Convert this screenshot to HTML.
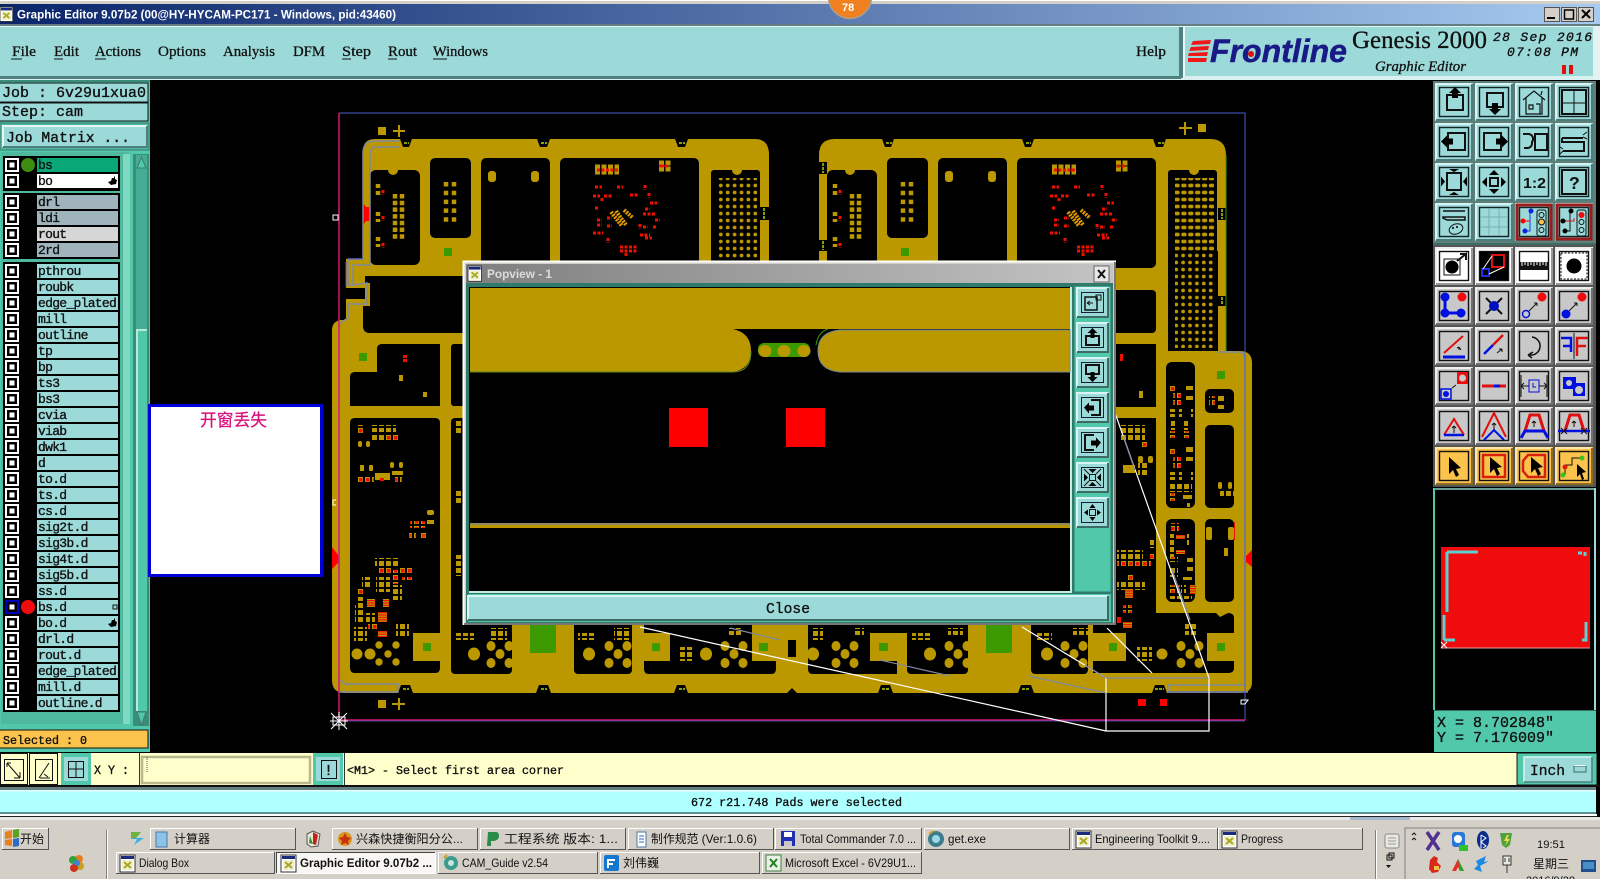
<!DOCTYPE html>
<html><head><meta charset="utf-8"><title>Graphic Editor</title>
<style>
html,body{margin:0;padding:0;background:#000;overflow:hidden}
svg{display:block;position:absolute;left:0;top:0}
.m{font-family:"Liberation Mono",monospace;font-weight:normal;fill:#111;stroke:#111;stroke-width:.35}
.s{font-family:"Liberation Serif",serif;font-weight:normal;fill:#111;stroke:#111;stroke-width:.3}
.a{font-family:"Liberation Sans","Noto Sans CJK SC",sans-serif;fill:#111}
.l text{font-family:"Liberation Mono",monospace;font-weight:normal;fill:#111;stroke:#111;stroke-width:.35;font-size:13px;letter-spacing:-.7px}
.k{fill:none;stroke:#111;stroke-width:2}
.n{fill:none;stroke:#111;stroke-width:1}
</style></head><body>
<svg width="1600" height="879" viewBox="0 0 1600 879">
<defs>
<linearGradient id="tg"><stop offset="0" stop-color="#0a246a"/><stop offset="1" stop-color="#a6caf0"/></linearGradient>
<linearGradient id="pg"><stop offset="0" stop-color="#7f7f7f"/><stop offset="1" stop-color="#c4c4c4"/></linearGradient>
<pattern id="bga" width="6.9" height="7" patternUnits="userSpaceOnUse"><circle cx="3.2" cy="3.5" r="1.9" fill="#bc9800"/></pattern>
<pattern id="gp" width="7" height="7" patternUnits="userSpaceOnUse"><rect x="1" y="1" width="5" height="5" fill="#bc9800"/></pattern>
<pattern id="rp" width="7" height="7" patternUnits="userSpaceOnUse"><rect x="1" y="1" width="5" height="5" fill="#bc9800"/><rect x="2" y="2" width="3.500" height="3.500" fill="#f01000"/></pattern>
<pattern id="op" width="3" height="2.400" patternUnits="userSpaceOnUse"><rect width="3" height="2.400" fill="#bc9800"/><rect width="3" height="1.200" fill="#f01000"/></pattern>
<g id="ck"><rect x="5" width="14" height="14" fill="#fff"/><rect x="7" y="2" width="10" height="10"/><rect x="9.5" y="4.5" width="5" height="5" fill="#fff"/></g>
<g id="row"><use href="#ck"/><rect x="37" width="81" height="14" fill="#9cd9d9"/></g>
<g id="hand"><path d="M0 6l3-1 1-3 2 0 0-2 1 1 0 2 2 1-1 4-5 1z"/></g>
<g id="bt"><rect width="38" height="38" fill="#9cd9d9"/><path d="M1 37V1H37" fill="none" stroke="#d8f4f4" stroke-width="2"/><path d="M37 1V37H1" fill="none" stroke="#4d7d7d" stroke-width="2"/><rect x="4.5" y="4.5" width="29" height="29" fill="none" stroke="#122" stroke-width="1.400"/></g>
<g id="bw"><rect width="38" height="38" fill="#fff"/><path d="M1 37V1H37" fill="none" stroke="#eee" stroke-width="2"/><path d="M37 1V37H1" fill="none" stroke="#999" stroke-width="2"/><rect x="4.5" y="4.5" width="29" height="29" fill="none" stroke="#111" stroke-width="1.400"/></g>
<g id="bg"><rect width="38" height="38" fill="#c8c8c8"/><path d="M1 37V1H37" fill="none" stroke="#eee" stroke-width="2"/><path d="M37 1V37H1" fill="none" stroke="#707070" stroke-width="2"/><rect x="4.5" y="4.5" width="29" height="29" fill="none" stroke="#111" stroke-width="1.400"/></g>
<g id="bo"><rect width="38" height="38" fill="#fcc34c"/><path d="M1 37V1H37" fill="none" stroke="#ffe6a8" stroke-width="2"/><path d="M37 1V37H1" fill="none" stroke="#8c6c20" stroke-width="2"/><rect x="4.5" y="4.5" width="29" height="29" fill="none" stroke="#111" stroke-width="1.400"/></g>
<g id="pb"><rect width="33" height="31" fill="#9cd9d9"/><path d="M1 30V1H32" fill="none" stroke="#d8f4f4" stroke-width="2"/><path d="M32 1V30H1" fill="none" stroke="#3c6c64" stroke-width="2"/><rect x="5.500" y="5.500" width="22" height="20" fill="none" stroke="#123"/></g>
<g id="xi"><rect width="15" height="17" fill="#fff" stroke="#333"/><rect x="1" y="1" width="13" height="3" fill="#1a2a7a"/><rect x="2" y="5" width="11" height="10" fill="#f0f0d0"/><path d="M4 7l7 6M11 7l-7 6" stroke="#a8a820" stroke-width="2"/></g>
<g id="c5" fill="#bc9800"><ellipse rx="4.500" ry="5"/><ellipse cy="17" rx="4.500" ry="5"/><ellipse cx="18" rx="4.500" ry="5"/><ellipse cx="18" cy="17" rx="4.500" ry="5"/><ellipse cx="9" cy="8" rx="4.500" ry="5"/></g>
<g id="up">
<g fill="#000"><rect x="370" y="170" width="50" height="95" rx="6"/><rect x="430" y="158" width="41" height="80" rx="5"/><rect x="481" y="158" width="69" height="110" rx="5"/><rect x="560" y="158" width="139" height="110" rx="5"/><rect x="711" y="170" width="49" height="110" rx="3"/></g>
<circle cx="393" cy="170" r="5" fill="#bc9800"/><circle cx="737" cy="170" r="5" fill="#bc9800"/>
<rect x="718" y="178" width="39" height="83" fill="url(#bga)"/>
<rect x="488" y="171" width="8" height="11" rx="3" fill="#bc9800"/><rect x="531" y="171" width="8" height="11" rx="3" fill="#bc9800"/>
<rect x="444" y="248" width="8" height="8" fill="#3c9a00"/>
<g fill="none" stroke="#bc9800">
<path stroke-width="4.500" stroke-dasharray="4.500 2.200" d="M395 194V240M402 194V240"/>
<path stroke-width="4.500" stroke-dasharray="4.500 4.300" d="M446 182V222M454 182V222"/>
<path stroke-width="4.500" stroke-dasharray="4 3" d="M378 184V195M378 212V222M378 237V247"/>
<path stroke-width="5" stroke-dasharray="5 1.500" d="M595 167H619M595 172H619M659 163H671M659 169H671"/>
</g>
<g fill="none" stroke="#f01000" stroke-width="3" stroke-dasharray="3 1.500">
<path d="M383 190V195M383 216V221M383 243V248M595 187H602M617 187H623M645 185V190M593 196H600M604 196H612M602 198V202M630 195H639M649 193V198M650 203H657M595 208H599M645 209H650M643 214H655M597 220H602M597 225H602M607 218H612M607 226H612M640 224V229M643 227H648M653 227H657M655 220H660M593 233H603M640 235H650M645 238H652M608 238V243M620 247H637M620 251H637M626 253V257M597 170H618M660 166H669"/>
</g>
<path d="M611 212L622 226M616 211L626 225M624 210L633 218" stroke="#e09a00" stroke-width="4" stroke-dasharray="2 1" fill="none"/>
</g>
</defs>
<rect width="1600" height="879" fill="#000"/>

<!-- PCB -->
<path fill="#bc9800" d="M375 139H400L403 147H409L412 139H537L540 147H547L550 139H675L678 147H685L688 139H755Q769 139 769 155V270H819V155Q819 139 835 139H882L885 147H891L894 139H1022L1025 147H1031L1034 139H1153L1156 147H1163L1166 139H1210Q1226 139 1226 155V351H1240Q1252 351 1252 363V682Q1252 693 1240 693H1167L1164 685H1155L1152 693H1034L1031 685H1021L1018 693H893L890 685H881L878 693H797L792 688L787 693H688L685 685H677L674 693H551L548 685H539L536 693H413L410 685H401L398 693H345Q332 693 332 680V330Q332 322 340 320H346V299H365V288H346V259H363V151Q363 139 375 139Z"/>
<g fill="#000">
<rect x="760" y="207" width="9" height="13"/><rect x="1218" y="208" width="8" height="12"/><rect x="1218" y="296" width="8" height="10"/><rect x="819" y="162" width="8" height="12"/><rect x="819" y="240" width="8" height="11"/>
<path d="M365 276H470V333H370Q363 333 363 326V306H370V283H365Z"/>
<path d="M382 344H440V406H350V377Q350 372 355 372H377V349Q377 344 382 344Z"/>
<rect x="451" y="344" width="20" height="62" rx="3"/>
<path d="M355 418H435Q440 418 440 423V633H413V661H440V668Q440 673 435 673H355Q350 673 350 668V423Q350 418 355 418Z"/>
<rect x="451" y="418" width="61" height="256" rx="4"/>
<rect x="574" y="600" width="58" height="74" rx="4"/>
<path d="M644 600H752V661H776V669Q776 674 771 674H649Q644 674 644 669Z"/>
<path d="M808 600H907V633H870V661H897V674H813Q808 674 808 669Z"/>
<path d="M870 600H907V633H870Z"/>
<rect x="907" y="600" width="61" height="74" rx="4"/>
<rect x="1031" y="600" width="57" height="74" rx="4"/>
<path d="M1093 600H1126V661H1093ZM1100 344H1156V407H1100ZM1100 418H1156V613H1216L1220 617L1228 613Q1234 613 1234 618V668Q1234 673 1228 673H1093V661H1100ZM1100 661"/>
<rect x="1100" y="290" width="56" height="43" rx="4"/>
<rect x="1166" y="362" width="29" height="146" rx="6"/><rect x="1166" y="519" width="29" height="83" rx="6"/>
<rect x="1205" y="389" width="29" height="24" rx="5"/><rect x="1205" y="425" width="29" height="83" rx="5"/><rect x="1205" y="519" width="29" height="83" rx="5"/>
</g>
<g fill="#bc9800"><rect x="1207" y="633" width="27" height="28"/><rect x="644" y="633" width="26" height="28"/><rect x="752" y="633" width="24" height="28"/><rect x="870" y="633" width="27" height="28"/><rect x="1093" y="633" width="33" height="28"/></g>
<rect x="788" y="640" width="8" height="17" fill="#000"/>
<use href="#up"/><use href="#up" transform="translate(457,0)"/>
<rect x="1168" y="251" width="50" height="100" fill="#000"/>
<rect x="1175" y="178" width="39" height="170" fill="url(#bga)"/>
<rect x="1218" y="306" width="8" height="45" fill="#bc9800"/>
<path d="M1226 155V351" stroke="#3c9a00" stroke-width="1"/>
<path d="M764 208v11M1222 209v10M1222 297v8M823 163v10M823 241v9" stroke="#8aa000" stroke-width="2" stroke-dasharray="3 1"/>
<g fill="#3c9a00"><rect x="530" y="625" width="26" height="28"/><rect x="986" y="625" width="26" height="28"/><rect x="359" y="353" width="8" height="8"/><rect x="423" y="643" width="8" height="8"/><rect x="652" y="643" width="8" height="8"/><rect x="759" y="643" width="9" height="8"/><rect x="879" y="643" width="9" height="8"/><rect x="1109" y="643" width="8" height="8"/><rect x="1217" y="371" width="8" height="8"/><rect x="1217" y="643" width="8" height="8"/></g>

<!-- pads H and lower -->
<g fill="url(#gp)">
<rect x="370" y="425" width="26" height="7"/><rect x="370" y="433" width="18" height="7"/><rect x="409" y="533" width="7" height="7"/><rect x="420" y="533" width="7" height="7"/>
<rect x="375" y="558" width="24" height="9"/><rect x="362" y="577" width="10" height="10"/><rect x="376" y="577" width="14" height="15"/><rect x="392" y="585" width="10" height="15"/><rect x="357" y="597" width="8" height="8"/><rect x="355" y="605" width="10" height="18"/><rect x="366" y="613" width="9" height="9"/><rect x="354" y="627" width="13" height="14"/><rect x="396" y="624" width="13" height="13"/>
<rect x="456" y="633" width="18" height="7"/><rect x="491" y="628" width="16" height="12"/><rect x="578" y="633" width="18" height="7"/><rect x="614" y="628" width="15" height="12"/><rect x="680" y="647" width="13" height="14"/><rect x="729" y="628" width="12" height="7"/><rect x="813" y="628" width="10" height="12"/><rect x="854" y="628" width="10" height="7"/><rect x="912" y="633" width="18" height="7"/><rect x="948" y="628" width="15" height="7"/><rect x="1035" y="633" width="17" height="7"/><rect x="1073" y="628" width="15" height="7"/><rect x="1137" y="647" width="15" height="14"/><rect x="1185" y="623" width="13" height="12"/>
<rect x="1169" y="409" width="8" height="8"/><rect x="1179" y="409" width="4" height="8"/><rect x="1189" y="409" width="4" height="8"/><rect x="1171" y="419" width="6" height="11"/><rect x="1182" y="419" width="6" height="11"/><rect x="1169" y="472" width="8" height="8"/><rect x="1179" y="472" width="4" height="8"/><rect x="1189" y="472" width="4" height="8"/><rect x="1169" y="482" width="23" height="10"/><rect x="1169" y="534" width="5" height="23"/><rect x="1187" y="534" width="4" height="13"/><rect x="1181" y="585" width="5" height="8"/><rect x="1168" y="595" width="24" height="4"/><rect x="1170" y="566" width="8" height="11"/>
<rect x="1120" y="425" width="25" height="15"/><rect x="1138" y="463" width="10" height="12"/><rect x="1117" y="550" width="26" height="10"/><rect x="1117" y="582" width="28" height="8"/><rect x="1150" y="539" width="4" height="9"/>
<rect x="1220" y="489" width="14" height="7"/><rect x="455" y="420" width="8" height="14"/><rect x="455" y="490" width="8" height="14"/><rect x="455" y="555" width="8" height="21"/>
</g>
<g fill="url(#rp)">
<rect x="358" y="425" width="7" height="10"/><rect x="386" y="433" width="14" height="7"/><rect x="356" y="476" width="18" height="7"/><rect x="395" y="475" width="7" height="7"/><rect x="410" y="521" width="15" height="7"/><rect x="409" y="533" width="7" height="7" opacity=".7"/><rect x="420" y="533" width="7" height="7" opacity=".7"/>
<rect x="377" y="568" width="14" height="7"/><rect x="400" y="568" width="12" height="7"/><rect x="402" y="577" width="10" height="5"/><rect x="391" y="570" width="7" height="14"/><rect x="358" y="587" width="7" height="8"/><rect x="368" y="623" width="9" height="7"/>
<rect x="1170" y="384" width="7" height="8"/><rect x="1173" y="393" width="8" height="14"/><rect x="1169" y="431" width="8" height="7"/><rect x="1182" y="431" width="7" height="7"/><rect x="1170" y="448" width="7" height="6"/><rect x="1173" y="457" width="8" height="13"/><rect x="1168" y="493" width="7" height="8"/><rect x="1171" y="523" width="8" height="9"/><rect x="1168" y="557" width="10" height="5"/><rect x="1168" y="585" width="12" height="8"/><rect x="1209" y="396" width="6" height="11"/>
<rect x="1140" y="440" width="7" height="7"/><rect x="1117" y="561" width="34" height="7"/><rect x="1126" y="575" width="9" height="8"/><rect x="1123" y="605" width="9" height="8"/><rect x="1150" y="553" width="5" height="7"/>
</g>
<g fill="url(#op)">
<rect x="367" y="599" width="8" height="8"/><rect x="383" y="599" width="6" height="8"/><rect x="378" y="612" width="9" height="10"/><rect x="378" y="631" width="9" height="6"/><rect x="1176" y="535" width="9" height="4"/><rect x="1176" y="550" width="9" height="4"/><rect x="1190" y="585" width="6" height="9"/><rect x="1125" y="589" width="8" height="9"/><rect x="1123" y="622" width="9" height="6"/>
</g>
<g fill="#bc9800">
<ellipse cx="474" cy="654" rx="6" ry="6.500"/><ellipse cx="589" cy="654" rx="6" ry="6.500"/><ellipse cx="706" cy="654" rx="6" ry="6.500"/><ellipse cx="813" cy="654" rx="6" ry="6.500"/><ellipse cx="930" cy="654" rx="6" ry="6.500"/><ellipse cx="1047" cy="654" rx="6" ry="6.500"/><ellipse cx="1162" cy="654" rx="5.500" ry="5.500"/>
<circle cx="357" cy="654" r="5.500"/><circle cx="370" cy="654" r="5.500"/><circle cx="379" cy="645" r="3.700"/><circle cx="396" cy="645" r="3.700"/><circle cx="388" cy="654" r="3.700"/><circle cx="379" cy="662" r="3.700"/><circle cx="396" cy="662" r="3.700"/>
<rect x="358" y="441" width="4" height="6" rx="2"/><rect x="366" y="441" width="4" height="6" rx="2"/><rect x="360" y="465" width="4" height="6"/><rect x="369" y="465" width="4" height="6" rx="1"/><rect x="390" y="462" width="4" height="6" rx="2"/><rect x="399" y="462" width="4" height="6" rx="2"/><rect x="392" y="471" width="11" height="4"/><rect x="375" y="473" width="15" height="7"/><rect x="427" y="510" width="7" height="5" rx="2"/><rect x="427" y="520" width="7" height="4"/>
<rect x="1186" y="386" width="7" height="4"/><rect x="1186" y="396" width="7" height="4"/><rect x="1186" y="447" width="7" height="5"/><rect x="1186" y="457" width="7" height="4"/><rect x="1183" y="495" width="9" height="4"/><rect x="1187" y="503" width="3" height="4"/><rect x="1187" y="558" width="6" height="4"/><rect x="1187" y="567" width="6" height="4"/><rect x="1183" y="577" width="9" height="3"/>
<rect x="1218" y="396" width="6" height="5"/><rect x="1218" y="405" width="6" height="4"/><rect x="1218" y="482" width="4" height="7" rx="2"/><rect x="1228" y="482" width="4" height="7" rx="2"/><rect x="1206" y="527" width="6" height="13" rx="2"/><rect x="1228" y="527" width="6" height="13" rx="2"/><rect x="1224" y="548" width="4" height="8"/>
<rect x="1138" y="456" width="5" height="7" rx="2"/><rect x="1148" y="456" width="5" height="7" rx="2"/><rect x="1139" y="391" width="4" height="7"/><rect x="1123" y="465" width="12" height="8"/>
<rect x="399" y="375" width="4" height="6"/><rect x="423" y="392" width="4" height="5"/>
</g>
<use href="#c5" x="491" y="646"/><use href="#c5" x="609" y="646"/><use href="#c5" x="725" y="646"/><use href="#c5" x="836" y="646"/><use href="#c5" x="949" y="646"/><use href="#c5" x="1065" y="646"/><use href="#c5" x="1181" y="646"/>
<g fill="#f01000"><rect x="403" y="355" width="4" height="3"/><rect x="403" y="359" width="4" height="3"/><rect x="1120" y="354" width="3" height="7"/><rect x="1117" y="617" width="4" height="6"/><rect x="380" y="478" width="4" height="3"/><rect x="1234" y="522" width="1" height="18"/></g>
<g fill="#f00"><path d="M363 203L370 212V216L363 225Z"/><rect x="366" y="207" width="4" height="14"/><path d="M332 547L339 556V562L332 569Z"/><path d="M1252 550L1246 556V562L1252 567Z"/><rect x="1138" y="699" width="8" height="7"/><rect x="1160" y="699" width="7" height="7"/></g>
<!-- gold marks -->
<g fill="#bc9800"><rect x="378" y="127" width="8" height="8"/><rect x="1198" y="124" width="8" height="8"/><rect x="378" y="700" width="8" height="8"/></g>
<path d="M393 131H405M399 125V137M1179 128H1192M1185 122V135M392 704H405M399 698V710" stroke="#bc9800" stroke-width="2"/>
<!-- tabs dash -->
<g stroke="#8aa000" stroke-width="2" stroke-dasharray="3 1"><path d="M404 143H409M541 143H547M679 143H685M886 143H892M1026 143H1031M1158 143H1164M403 689H409M541 689H547M679 689H685M882 689H890M1022 689H1030M1155 689H1164"/></g>
<!-- grey outline on board -->
<g fill="none" stroke="#7f8aa0" stroke-width="1.500">
<path d="M400 141H375Q363 141 363 153V259H348V285H353M400 147H376Q370 147 370 155V265H353V285L367 283V304H348V318L340 323Q339 324 339 326V692H398V684H345L340 680"/>
<path d="M1168 685H1245V360Q1245 352 1238 352H1218M1168 685V692H1248"/>
</g>
<path d="M348 259H363M346 262V287M1168 692H1245" stroke="#4a60d0" stroke-width="1" fill="none"/>
<!-- outline rect -->
<path d="M339 113H1245V720" fill="none" stroke="#4a60d0" stroke-width="1"/>
<path d="M339 113V720H1245" fill="none" stroke="#d81870" stroke-width="1.500"/>
<path d="M339 721H1245" stroke="#4a60d0" stroke-width=".7"/>
<g stroke="#fff" stroke-width="1" fill="none">
<path d="M331 713L347 729M347 713L331 729M339 712V730M330 721H348M333 717H345V725H333Z"/>
<path d="M333 215h5v5h-5zM1241 700h7l-3 4h-4zM336 500h-3v5h3"/>
</g>
<!-- zoom frame lines -->
<g fill="none" stroke-width="1.200">
<path d="M1106 678V731H1209V678" stroke="#fff"/>
<path d="M1106 678H1209" stroke="#7f8aa0"/>
<path d="M1209 678L1115 413M1106 731L640 627M1106 678L1022 627M1152 673L1107 628" stroke="#fff"/>
<path d="M1106 693L1029 676M950 676L880 660M780 640L730 628" stroke="#7f8aa0"/>
<path d="M1106 678L1085 665M1190 620L1172 570M1135 470L1123 436" stroke="#7f8aa0"/>
</g>

<!-- top chrome -->
<rect width="1600" height="4" fill="#d4d0c8"/><rect y="0" width="1600" height="1" fill="#fff"/>
<rect y="4" width="1600" height="20" fill="url(#tg)"/>
<rect y="24" width="1600" height="2" fill="#647f80"/><rect y="26" width="1600" height="1" fill="#e0f4f4"/>
<rect y="27" width="1600" height="49" fill="#9cd9d9"/>
<rect y="76" width="1600" height="2" fill="#4f7f7f"/><rect y="78" width="1600" height="2" fill="#d8f0f0"/>
<use href="#xi" transform="translate(0,7) scale(.85)"/>
<text x="17" y="18.500" class="a" style="fill:#fff;font-weight:bold;font-size:12px" textLength="379" lengthAdjust="spacingAndGlyphs">Graphic Editor 9.07b2 (00@HY-HYCAM-PC171 - Windows, pid:43460)</text>
<circle cx="850" cy="-3" r="21.500" fill="#f08020" stroke="#a9a090" stroke-width="1.500"/>
<text x="842" y="11" class="a" style="fill:#fff;font-weight:bold;font-size:11px">78</text>
<g style="font-size:15px">
<text class="s" x="12" y="56" textLength="24" lengthAdjust="spacingAndGlyphs">File</text>
<text class="s" x="54" y="56" textLength="25" lengthAdjust="spacingAndGlyphs">Edit</text>
<text class="s" x="95" y="56" textLength="46" lengthAdjust="spacingAndGlyphs">Actions</text>
<text class="s" x="158" y="56" textLength="48" lengthAdjust="spacingAndGlyphs">Options</text>
<text class="s" x="223" y="56" textLength="52" lengthAdjust="spacingAndGlyphs">Analysis</text>
<text class="s" x="293" y="56" textLength="32" lengthAdjust="spacingAndGlyphs">DFM</text>
<text class="s" x="342" y="56" textLength="29" lengthAdjust="spacingAndGlyphs">Step</text>
<text class="s" x="388" y="56" textLength="29" lengthAdjust="spacingAndGlyphs">Rout</text>
<text class="s" x="433" y="56" textLength="55" lengthAdjust="spacingAndGlyphs">Windows</text>
<text class="s" x="1136" y="56" textLength="30" lengthAdjust="spacingAndGlyphs">Help</text>
</g>
<path d="M11 59h11M54 59h9M95 59h11M342 59h9M388 59h9M433 59h14" stroke="#111"/>
<path d="M1180 27V78H0" fill="none" stroke="#4f7f7f" stroke-width="2"/>
<path d="M1184 78V27" stroke="#e8f8f8" stroke-width="2"/><rect x="1181" y="27" width="2" height="51" fill="#4f7f7f"/>
<rect x="1184" y="76" width="410" height="2" fill="#d8f0f0"/><rect x="1593" y="27" width="7" height="53" fill="#e4f2f2"/>
<!-- window buttons -->
<g fill="#d4d0c8" stroke="#555"><rect x="1544.500" y="7.500" width="15" height="14"/><rect x="1561.500" y="7.500" width="15" height="14"/><rect x="1578.500" y="7.500" width="15" height="14"/></g>
<path d="M1547 18h8" stroke="#000" stroke-width="2"/><rect x="1564.500" y="10" width="9" height="9" fill="none" stroke="#000" stroke-width="1.500"/><path d="M1582 10l8 8M1590 10l-8 8" stroke="#000" stroke-width="2"/>
<!-- logo -->
<g fill="#f01818"><path d="M1193 41L1211 40 1210 44 1191 45ZM1191 47L1209 46 1208 50 1189 51ZM1189 53L1208 52 1207 56 1188 56ZM1188 58L1207 58 1206 62 1188 62Z"/></g>
<text x="1210" y="62" style="font-family:'Liberation Sans',sans-serif;font-weight:bold;font-style:italic;font-size:32px;fill:#1a1a86;stroke:#1a1a86;stroke-width:.5" textLength="137" lengthAdjust="spacingAndGlyphs">Frontline</text>
<circle cx="1251" cy="54" r="3" fill="#e01010"/>
<text x="1352" y="48" class="s" style="font-size:25px" textLength="135" lengthAdjust="spacingAndGlyphs">Genesis 2000</text>
<text x="1375" y="71" class="s" style="font-size:15px;font-style:italic" textLength="91" lengthAdjust="spacingAndGlyphs">Graphic Editor</text>
<text x="1493" y="41" class="m" style="font-size:13px;font-style:italic" textLength="99">28 Sep 2016</text>
<text x="1507" y="56" class="m" style="font-size:13px;font-style:italic" textLength="71">07:08 PM</text>
<rect x="1562" y="65" width="4" height="9" fill="#e01010"/><rect x="1569" y="65" width="4" height="9" fill="#e01010"/>

<!-- left panel -->
<rect y="80" width="150" height="672" fill="#52c8aa"/>
<rect x="0" y="80" width="150" height="2" fill="#3c8c7a"/>
<rect x="-1" y="83" width="149" height="19" fill="#9cd9d9" stroke="#111"/><rect x="-1" y="103" width="149" height="18" fill="#9cd9d9" stroke="#111"/>
<text x="2" y="97" class="m" style="font-size:15px" textLength="144" lengthAdjust="spacingAndGlyphs">Job : 6v29u1xua0</text>
<text x="2" y="116" class="m" style="font-size:15px;" textLength="81" lengthAdjust="spacingAndGlyphs">Step: cam</text>
<rect x="0" y="123" width="149" height="27" fill="#4fb9a0" stroke="#3c7c6c"/>
<rect x="3" y="126" width="144" height="21" fill="#9cd9d9"/><path d="M3 147V126H147" fill="none" stroke="#e4f6f6" stroke-width="2"/><path d="M147 126V147H3" fill="none" stroke="#4f7f7f" stroke-width="2"/>
<text x="6" y="142" class="m" style="font-size:15px" textLength="124" lengthAdjust="spacingAndGlyphs">Job Matrix ...</text>
<rect x="1" y="152" width="128" height="572" fill="#4fb9a0"/>
<rect x="123" y="154" width="7" height="570" fill="#7fd9c0"/>
<rect x="133" y="154" width="16" height="572" fill="#3c8c7a"/>
<rect x="136" y="155" width="11" height="174" fill="#45ad95"/>
<rect x="136" y="329" width="11" height="382" fill="#52c8aa"/><rect x="136" y="329" width="11" height="2" fill="#b8ead8"/><rect x="136" y="329" width="2" height="382" fill="#b8ead8"/>
<path d="M141.500 157L146 168H137Z" fill="#52c8aa" stroke="#3c7c6c"/><path d="M141.500 725L146 712H137Z" fill="#52c8aa" stroke="#3c7c6c"/>
<rect x="3" y="156" width="117" height="35"/><rect x="3" y="193" width="117" height="66"/><rect x="3" y="262" width="117" height="450"/>
<g class="l">
<use href="#ck" y="158"/><rect x="37" y="158" width="81" height="14" fill="#0aa878"/><circle cx="28" cy="165" r="7" fill="#3c8c10"/><text x="38" y="169">bs</text>
<use href="#ck" y="174"/><rect x="37" y="174" width="81" height="14" fill="#fff"/><text x="38" y="185">bo</text><use href="#hand" transform="translate(108,176)"/>
<use href="#ck" y="195"/><rect x="37" y="195" width="81" height="14" fill="#a0b4be"/><text x="38" y="206">drl</text>
<use href="#ck" y="211"/><rect x="37" y="211" width="81" height="14" fill="#a0b4be"/><text x="38" y="222">ldi</text>
<use href="#ck" y="227"/><rect x="37" y="227" width="81" height="14" fill="#d6d6d6"/><text x="38" y="238">rout</text>
<use href="#ck" y="243"/><rect x="37" y="243" width="81" height="14" fill="#a0b4be"/><text x="38" y="254">2rd</text>
<g transform="translate(0,264)"><use href="#row"/><text x="38" y="11">pthrou</text></g>
<g transform="translate(0,280)"><use href="#row"/><text x="38" y="11">roubk</text></g>
<g transform="translate(0,296)"><use href="#row"/><text x="38" y="11">edge_plated</text></g>
<g transform="translate(0,312)"><use href="#row"/><text x="38" y="11">mill</text></g>
<g transform="translate(0,328)"><use href="#row"/><text x="38" y="11">outline</text></g>
<g transform="translate(0,344)"><use href="#row"/><text x="38" y="11">tp</text></g>
<g transform="translate(0,360)"><use href="#row"/><text x="38" y="11">bp</text></g>
<g transform="translate(0,376)"><use href="#row"/><text x="38" y="11">ts3</text></g>
<g transform="translate(0,392)"><use href="#row"/><text x="38" y="11">bs3</text></g>
<g transform="translate(0,408)"><use href="#row"/><text x="38" y="11">cvia</text></g>
<g transform="translate(0,424)"><use href="#row"/><text x="38" y="11">viab</text></g>
<g transform="translate(0,440)"><use href="#row"/><text x="38" y="11">dwk1</text></g>
<g transform="translate(0,456)"><use href="#row"/><text x="38" y="11">d</text></g>
<g transform="translate(0,472)"><use href="#row"/><text x="38" y="11">to.d</text></g>
<g transform="translate(0,488)"><use href="#row"/><text x="38" y="11">ts.d</text></g>
<g transform="translate(0,504)"><use href="#row"/><text x="38" y="11">cs.d</text></g>
<g transform="translate(0,520)"><use href="#row"/><text x="38" y="11">sig2t.d</text></g>
<g transform="translate(0,536)"><use href="#row"/><text x="38" y="11">sig3b.d</text></g>
<g transform="translate(0,552)"><use href="#row"/><text x="38" y="11">sig4t.d</text></g>
<g transform="translate(0,568)"><use href="#row"/><text x="38" y="11">sig5b.d</text></g>
<g transform="translate(0,584)"><use href="#row"/><text x="38" y="11">ss.d</text></g>
<g transform="translate(0,600)"><use href="#row"/><rect x="5" width="14" height="14" fill="#0000c0"/><rect x="7" y="2" width="10" height="10" fill="#000"/><rect x="9.500" y="4.500" width="5" height="5" fill="#fff"/><circle cx="28" cy="7" r="7" fill="#f00c0c"/><text x="38" y="11">bs.d</text><rect x="113" y="5" width="4" height="4" fill="none" stroke="#111"/></g>
<g transform="translate(0,616)"><use href="#row"/><text x="38" y="11">bo.d</text><use href="#hand" transform="translate(108,2)"/></g>
<g transform="translate(0,632)"><use href="#row"/><text x="38" y="11">drl.d</text></g>
<g transform="translate(0,648)"><use href="#row"/><text x="38" y="11">rout.d</text></g>
<g transform="translate(0,664)"><use href="#row"/><text x="38" y="11">edge_plated</text></g>
<g transform="translate(0,680)"><use href="#row"/><text x="38" y="11">mill.d</text></g>
<g transform="translate(0,696)"><use href="#row"/><text x="38" y="11">outline.d</text></g>
</g>
<rect x="-1" y="730" width="149" height="18" fill="#fcc34c" stroke="#111"/>
<text x="3" y="744" class="m" style="font-size:12px;" textLength="84" lengthAdjust="spacingAndGlyphs">Selected : 0</text>
<!-- note box -->
<rect x="149.500" y="405.500" width="172" height="170" fill="#fff" stroke="#0000d8" stroke-width="3"/>
<text x="200" y="426" style="font-family:'Noto Sans CJK SC','WenQuanYi Zen Hei',sans-serif;font-size:17px;fill:#d8107c;stroke:#d8107c;stroke-width:.25" textLength="67" lengthAdjust="spacingAndGlyphs">开窗丢失</text>

<!-- right toolbar -->
<rect x="1433" y="81" width="163" height="406" fill="#5f7f79"/>
<rect x="1433" y="243" width="163" height="2" fill="#3c6c64"/>
<rect x="1596" y="81" width="4" height="406" fill="#000"/>
<g transform="translate(1435,83)"><use href="#bt"/><rect x="12" y="12" width="16" height="15" class="k"/><path d="M20 4l6 6h-3v5h-6v-5h-3z"/></g>
<g transform="translate(1475,83)"><use href="#bt"/><rect x="12" y="10" width="16" height="14" class="k"/><path d="M20 32l6-6h-3v-6h-6v6h-3z"/></g>
<g transform="translate(1515,83)"><use href="#bt"/><path d="M8 17L19 8 30 17M11 15V31H27V15M14 22h4v4h-4zM21 21h4v10M27 8L26 12" class="n" style="stroke-width:1.200"/></g>
<g transform="translate(1555,83)"><use href="#bt"/><rect x="7" y="7" width="24" height="24" class="k"/><path d="M19 7V31M7 20H31" class="n"/></g>
<g transform="translate(1435,123)"><use href="#bt"/><rect x="13" y="10" width="17" height="17" class="k"/><path d="M6 18.500l6-6v3h6v6h-6v3z"/></g>
<g transform="translate(1475,123)"><use href="#bt"/><rect x="9" y="10" width="17" height="17" class="k"/><path d="M33 18.500l-6-6v3h-6v6h6v3z"/></g>
<g transform="translate(1515,123)"><use href="#bt"/><rect x="20" y="11" width="12" height="16" class="k"/><path d="M8 11h6a5 5 0 0 1 3 8v2a5 5 0 0 1-4 4H9" class="k"/></g>
<g transform="translate(1555,123)"><use href="#bt"/><path d="M7 15H28M7 15V19H29V28H8" class="k"/><path d="M28 12l4-3M28 14l4 2M8 26l-3-2M8 28l-3 3" class="n"/></g>
<g transform="translate(1435,163)"><use href="#bt"/><rect x="12" y="10" width="14" height="17" class="k"/><path d="M19 9l-5-3h10zM19 29l-5 3h10zM10 18.500l-4-5v10zM28 18.500l4-5v10z"/></g>
<g transform="translate(1475,163)"><use href="#bt"/><rect x="15" y="15" width="8" height="8" class="k"/><path d="M19 7l-5 5h10zM19 31l-5-5h10zM7 19l5-5v10zM31 19l-5-5v10z"/></g>
<g transform="translate(1515,163)"><use href="#bt"/><text x="8" y="25" style="font-family:'Liberation Sans',sans-serif;font-weight:bold;font-size:15px;fill:#111" textLength="23" lengthAdjust="spacingAndGlyphs">1:2</text></g>
<g transform="translate(1555,163)"><use href="#bt"/><rect x="7" y="7" width="24" height="24" class="k"/><text x="14" y="26" style="font-family:'Liberation Mono',monospace;font-weight:bold;font-size:18px;fill:#111">?</text></g>
<g transform="translate(1435,203)"><use href="#bt"/><path d="M8 8H30M8 14H30V17H12L8 15Z" class="k" style="stroke-width:1.500"/><ellipse cx="21" cy="26" rx="7" ry="5" class="n" transform="rotate(-20 21 26)"/><circle cx="18" cy="25" r="1"/><circle cx="22" cy="24" r="1"/></g>
<g transform="translate(1475,203)"><use href="#bt"/><path d="M14 5V33M24 5V33M5 14H33M5 24H33" stroke="#7ab0b0" fill="none"/></g>
<g transform="translate(1515,203)"><use href="#bt"/><rect x="2" y="2" width="34" height="34" fill="none" stroke="#9c1c1c" stroke-width="3"/><path d="M15 8V18H8M15 18V28H9" stroke="#2040e0" fill="none"/><path d="M8 18H15" stroke="#f00"/><circle cx="16" cy="8" r="2.500" fill="#1020e0"/><circle cx="8" cy="18" r="2.500" fill="#f00"/><circle cx="10" cy="28" r="2.500" fill="#1020e0"/><rect x="22" y="7" width="9" height="26" rx="2" class="n"/><circle cx="26.500" cy="12" r="2.500" class="n"/><circle cx="26.500" cy="19" r="3" fill="#fcc34c" stroke="#111"/><circle cx="26.500" cy="27" r="2.500" class="n"/></g>
<g transform="translate(1555,203)"><use href="#bt"/><rect x="2" y="2" width="34" height="34" fill="none" stroke="#9c1c1c" stroke-width="3"/><path d="M15 8V18H8M15 18V28H9" class="n"/><path d="M11 18h8v-3" stroke="#e01010" fill="none"/><circle cx="16" cy="8" r="2.500"/><circle cx="8" cy="18" r="2.500"/><circle cx="10" cy="28" r="2.500"/><rect x="22" y="7" width="9" height="26" rx="2" class="n"/><circle cx="26.500" cy="12" r="3" fill="#f00c0c"/><circle cx="26.500" cy="19" r="2.500" class="n"/><circle cx="26.500" cy="27" r="2.500" class="n"/></g>
<rect x="1433" y="245" width="163" height="242" fill="#555"/>
<g transform="translate(1435,247)"><use href="#bw"/><circle cx="17" cy="20" r="6.500"/><rect x="9" y="12" width="16" height="16" class="n"/><path d="M22 14l9-7v6M31 7h-6" class="k"/></g>
<g transform="translate(1475,247)"><use href="#bw"/><rect x="5" y="5" width="28" height="28"/><rect x="17" y="8" width="12" height="12" fill="none" stroke="#e01010" stroke-width="2"/><rect x="7" y="22" width="7" height="7" fill="none" stroke="#2030e0" stroke-width="2"/><path d="M8 22L17 9M14 27L29 20" stroke="#fff" fill="none"/></g>
<g transform="translate(1515,247)"><use href="#bw"/><path d="M5 15H33V23H5Z" fill="#111"/><path d="M7 15v4M10 15v3M13 15v4M16 15v3M19 15v4M22 15v3M25 15v4M28 15v3M31 15v4" stroke="#fff"/></g>
<g transform="translate(1555,247)"><use href="#bw"/><rect x="6" y="6" width="26" height="26" fill="none" stroke="#111" stroke-dasharray="2 1.500"/><circle cx="19" cy="19" r="7.500"/></g>
<g transform="translate(1435,287)"><use href="#bg"/><path d="M10 10V26H25" stroke="#0010e0" stroke-width="3" fill="none"/><circle cx="10" cy="10" r="4.500" fill="#0010e0"/><circle cx="10" cy="26" r="4.500" fill="#0010e0"/><circle cx="26" cy="26" r="4.500" fill="#0010e0"/><circle cx="27" cy="10" r="4.500" fill="#f00c0c"/></g>
<g transform="translate(1475,287)"><use href="#bg"/><path d="M11 11L27 27M27 11L11 27" stroke="#111" stroke-width="2"/><circle cx="19" cy="19" r="5" fill="#0010c0"/></g>
<g transform="translate(1515,287)"><use href="#bg"/><circle cx="11" cy="27" r="3.500" fill="none" stroke="#0010e0" stroke-width="1.500"/><circle cx="27" cy="10" r="4.500" fill="#f00c0c"/><path d="M14 24l8-8M22 16h-3M22 16v3" class="n"/></g>
<g transform="translate(1555,287)"><use href="#bg"/><circle cx="11" cy="27" r="4.500" fill="#0010e0"/><circle cx="27" cy="10" r="4.500" fill="#f00c0c"/><path d="M14 24l8-8M22 16h-3M22 16v3" class="n"/></g>
<g transform="translate(1435,327)"><use href="#bg"/><path d="M9 26L28 9" stroke="#e01010" stroke-width="2" fill="none"/><path d="M8 30H30" stroke="#0010e0" stroke-width="3"/><path d="M24 20l2 3M24 20l-2 1M24 20v3" class="n"/></g>
<g transform="translate(1475,327)"><use href="#bg"/><path d="M9 27L18 18" stroke="#0010e0" stroke-width="2.500"/><path d="M18 18L28 8" stroke="#e01010" stroke-width="2.500"/><path d="M22 26l5-4M27 22h-3M27 22v3" class="n"/></g>
<g transform="translate(1515,327)"><use href="#bg"/><path d="M17 10a9 9 0 1 1-2 18M13 28l5-3M13 28l4 3" class="n" style="stroke-width:1.500"/></g>
<g transform="translate(1555,327)"><use href="#bg"/><path d="M19 6V32" class="n"/><path d="M6 11H16V19H8M16 11V25" stroke="#0010e0" stroke-width="2.500" fill="none"/><path d="M33 11H22V29M22 19H31" stroke="#e01010" stroke-width="2.500" fill="none"/></g>
<g transform="translate(1435,367)"><use href="#bg"/><rect x="22" y="5" width="11" height="12" fill="#f00c0c"/><circle cx="27.500" cy="11" r="3.500" fill="#c8c8c8"/><rect x="6" y="22" width="10" height="10" fill="none" stroke="#0010e0" stroke-width="1.500"/><circle cx="11" cy="27" r="3" fill="#0010e0"/><path d="M17 21l4-3" class="n"/></g>
<g transform="translate(1475,367)"><use href="#bg"/><path d="M7 19H19" stroke="#e01010" stroke-width="3"/><path d="M19 19H25" stroke="#0010e0" stroke-width="3"/><path d="M25 19H31" stroke="#e01010" stroke-width="3"/></g>
<g transform="translate(1515,367)"><use href="#bg"/><path d="M6 8V30M32 8V30M6 19H14M24 19H32M6 19l3-3M6 19l3 3M32 19l-3-3M32 19l-3 3" stroke="#111" fill="none"/><path d="M14 13H24V25H14Z" fill="none" stroke="#0010e0"/><path d="M18 16v4h3" stroke="#0010e0" fill="none"/></g>
<g transform="translate(1555,367)"><use href="#bg"/><path d="M8 10H21V16H30V29H18V22H8Z" fill="#0010e0"/><circle cx="14" cy="16" r="3" fill="#c8c8c8"/><circle cx="24" cy="23" r="4" fill="#c8c8c8"/></g>
<g transform="translate(1435,407)"><use href="#bg"/><path d="M9 28L19 12 29 28" fill="none" stroke="#e01010" stroke-width="2"/><path d="M9 28H29" stroke="#0010e0" stroke-width="2.500"/><path d="M19 26v-7M19 19l-2 2M19 19l2 2" class="n"/></g>
<g transform="translate(1475,407)"><use href="#bg"/><path d="M7 30L19 6 31 30" fill="none" stroke="#e01010" stroke-width="2"/><path d="M9 33L19 23 29 33" fill="none" stroke="#0010e0" stroke-width="2"/><path d="M19 22v-6M19 16l-2 2M19 16l2 2" class="n"/></g>
<g transform="translate(1515,407)"><use href="#bg"/><path d="M10 24L15 8H24L29 24" fill="none" stroke="#e01010" stroke-width="3"/><path d="M6 31L10 24H29L33 31" fill="none" stroke="#0010e0" stroke-width="3"/><path d="M19 20v-6M19 14l-2 2M19 14l2 2" class="n"/></g>
<g transform="translate(1555,407)"><use href="#bg"/><path d="M10 24L15 8H24L29 24" fill="none" stroke="#e01010" stroke-width="3"/><path d="M3 24H35" stroke="#0010e0" stroke-width="2.500"/><path d="M6 21l6 6M12 21l-6 6M26 21l6 6M32 21l-6 6" class="n"/><path d="M19 20v-6M19 14l-2 2M19 14l2 2" class="n"/></g>
<g transform="translate(1435,447)"><use href="#bo"/><path d="M14 10V27L18 23 21 30 24 28 21 22 26 21Z"/></g>
<g transform="translate(1475,447)"><use href="#bo"/><rect x="8" y="8" width="22" height="22" fill="none" stroke="#d8200c" stroke-width="2.500"/><path d="M15 10V26L19 22 22 29 25 27 22 21 27 20Z"/></g>
<g transform="translate(1515,447)"><use href="#bo"/><path d="M13 8H30V30H13L8 24V14Z" fill="none" stroke="#d8200c" stroke-width="2.500"/><path d="M16 10V26L20 22 23 29 26 27 23 21 28 20Z"/></g>
<g transform="translate(1555,447)"><use href="#bo"/><path d="M10 28V18H17V11H27" class="n"/><circle cx="10" cy="20" r="2.500" fill="#d8200c"/><circle cx="8" cy="28" r="2.500" fill="#40c020"/><circle cx="27" cy="11" r="2.500" fill="#40c020"/><path d="M22 17V30L25 27 27 33 29 32 27 26 31 25Z"/></g>
<!-- mini map -->
<rect x="1433" y="488" width="163" height="2" fill="#6a9a90"/><rect x="1433" y="488" width="2" height="222" fill="#52c8aa"/><rect x="1594" y="488" width="2" height="222" fill="#9cd9d9"/>
<path d="M1441 547H1590V648H1441Z" fill="#f00c0c"/>
<path d="M1447 552H1478M1447 552V612M1444 615V640M1578 553H1582M1585 552V556M1582 640H1586V622M1444 640H1455" fill="none" stroke="#5fd0d0" stroke-width="3"/>
<path d="M1441 648H1590" stroke="#e0a0a0"/>
<path d="M1441 642l6 6M1447 642l-6 6" stroke="#fff"/>
<!-- XY -->
<rect x="1434" y="710" width="162" height="42" fill="#52c8aa"/><rect x="1434" y="710" width="162" height="1" fill="#2f6f60"/>
<text x="1437" y="727" class="m" style="font-size:15px" textLength="117" lengthAdjust="spacingAndGlyphs">X = 8.702848"</text>
<text x="1437" y="742" class="m" style="font-size:15px" textLength="117" lengthAdjust="spacingAndGlyphs">Y = 7.176009"</text>

<!-- bottom prompt -->
<rect y="752" width="1600" height="35" fill="#000"/>
<rect y="753" width="1517" height="32" fill="#ffffcc"/>
<rect x="1517" y="753" width="80" height="32" fill="#52c8aa" stroke="#111"/>
<rect x="1524" y="757" width="68" height="25" fill="#9cd9d9"/><path d="M1524 782V757H1592" fill="none" stroke="#d8f4f4" stroke-width="1.500"/><path d="M1592 757V782H1524" fill="none" stroke="#4f7f7f" stroke-width="1.500"/>
<text x="1530" y="775" class="m" style="font-size:15px" textLength="35" lengthAdjust="spacingAndGlyphs">Inch</text>
<rect x="1574" y="766" width="12" height="6" fill="#9cd9d9" stroke="#3c6c64"/><rect x="1574" y="765" width="12" height="1" fill="#f0ffff"/>
<rect x="1597" y="753" width="3" height="36" fill="#000"/>
<g fill="#ffffcc" stroke="#111"><rect x=".5" y="753.500" width="27" height="31"/><rect x="29.500" y="753.500" width="28" height="31"/></g>
<rect x="4.500" y="759.500" width="19" height="21" fill="none" stroke="#111"/><rect x="35.500" y="759.500" width="17" height="21" fill="none" stroke="#111"/>
<path d="M7 763L20 778M20 778V772M20 778H14M7 763h4M7 763v4M39 778L49 763M40 778H50M44 774l4 3" class="n"/>
<rect x="61" y="753" width="30" height="32" fill="#52c8aa"/><rect x="64" y="757" width="24" height="24" fill="#9cd9d9"/><rect x="68.500" y="761.500" width="15" height="16" class="n"/><path d="M76 762V777M69 769H83" class="n"/>
<text x="94" y="774" class="m" style="font-size:13px" textLength="35" lengthAdjust="spacingAndGlyphs">X Y :</text>
<rect x="139" y="753" width="1" height="32" fill="#333"/>
<rect x="142" y="757" width="168" height="26" fill="#ffffcc" stroke="#b8b88c" stroke-width="2.500"/>
<path d="M147 757V773" stroke="#555" stroke-dasharray="1 1"/>
<rect x="313" y="753" width="30" height="32" fill="#52c8aa"/><rect x="316" y="757" width="24" height="24" fill="#9cd9d9"/><rect x="321.500" y="760.500" width="15" height="18" class="n"/>
<text x="324" y="775" class="m" style="font-size:15px">!</text>
<rect x="344" y="753" width="1" height="32" fill="#333"/>
<text x="347" y="774" class="m" style="font-size:12px" textLength="217" lengthAdjust="spacingAndGlyphs">&lt;M1&gt; - Select first area corner</text>
<rect y="785" width="1600" height="2" fill="#101010"/>
<rect y="787" width="1596" height="3" fill="#647f80"/>
<rect y="790" width="1596" height="23" fill="#aeffff"/><rect y="790" width="1596" height="1.500" fill="#e8ffff"/><rect y="812" width="1596" height="2" fill="#5f8f8f"/>
<rect y="814" width="1597" height="2" fill="#fff"/><rect y="816" width="1597" height="1" fill="#222"/>
<text x="691" y="806" class="m" style="font-size:12px" textLength="211" lengthAdjust="spacingAndGlyphs">672 r21.748 Pads were selected</text>
<rect y="817" width="1600" height="3" fill="#e8e8e8"/>

<!-- taskbar -->
<rect y="820" width="1600" height="59" fill="#d4d0c8"/>
<rect x="1350" y="817" width="60" height="3" fill="#a8b8cc"/>
<rect x="106" y="830" width="1" height="49" fill="#808080"/><rect x="107" y="830" width="1" height="49" fill="#fff"/>
<rect x="1375" y="830" width="1" height="49" fill="#808080"/><rect x="1376" y="830" width="1" height="49" fill="#fff"/>
<path d="M1405 879V828H1600" fill="none" stroke="#808080"/>
<rect x="276" y="852" width="159" height="21" fill="#f8f6f2"/>
<path fill="none" stroke="#fff" d="M2.500 849V828.500H48M150.500 849V828.500H295M332.500 849V828.500H477M480.500 849V828.500H625M628.500 849V828.500H773M775.500 849V828.500H921M924.500 849V828.500H1069M1072.500 849V828.500H1217M1218.500 849V828.500H1362M116.500 873V852.500H274M438.500 873V852.500H597M600.500 873V852.500H759M762.500 873V852.500H921"/>
<path fill="none" stroke="#555" d="M48.500 828V849.500H2M295.500 828V849.500H150M477.500 828V849.500H332M625.500 828V849.500H480M773.500 828V849.500H628M921.500 828V849.500H775M1069.500 828V849.500H924M1217.500 828V849.500H1072M1362.500 828V849.500H1218M274.500 852V873.500H116M597.500 852V873.500H438M759.500 852V873.500H600M921.500 852V873.500H762"/>
<path fill="none" stroke="#444" d="M276.500 873V852.500H435"/><path fill="none" stroke="#fff" d="M435.500 852V873.500H276"/>
<g>
<text class="a" x="20" y="843" style="font-size:12px" textLength="24" lengthAdjust="spacingAndGlyphs">开始</text>
<text class="a" x="174" y="843" style="font-size:12px" textLength="36" lengthAdjust="spacingAndGlyphs">计算器</text>
<text class="a" x="356" y="843" style="font-size:12px" textLength="107" lengthAdjust="spacingAndGlyphs">兴森快捷衡阳分公...</text>
<text class="a" x="504" y="843" style="font-size:12px" textLength="114" lengthAdjust="spacingAndGlyphs">工程系统  版本: 1...</text>
<text class="a" x="651" y="843" style="font-size:12px" textLength="106" lengthAdjust="spacingAndGlyphs">制作规范 (Ver:1.0.6)</text>
<text class="a" x="800" y="843" style="font-size:12px" textLength="116" lengthAdjust="spacingAndGlyphs">Total Commander 7.0 ...</text>
<text class="a" x="948" y="843" style="font-size:12px" textLength="38" lengthAdjust="spacingAndGlyphs">get.exe</text>
<text class="a" x="1095" y="843" style="font-size:12px" textLength="115" lengthAdjust="spacingAndGlyphs">Engineering Toolkit 9....</text>
<text class="a" x="1241" y="843" style="font-size:12px" textLength="42" lengthAdjust="spacingAndGlyphs">Progress</text>
<text class="a" x="139" y="867" style="font-size:12px" textLength="50" lengthAdjust="spacingAndGlyphs">Dialog Box</text>
<text class="a" x="300" y="867" style="font-size:12px;font-weight:bold" textLength="132" lengthAdjust="spacingAndGlyphs">Graphic Editor 9.07b2 ...</text>
<text class="a" x="462" y="867" style="font-size:12px" textLength="86" lengthAdjust="spacingAndGlyphs">CAM_Guide v2.54</text>
<text class="a" x="623" y="867" style="font-size:12px" textLength="36" lengthAdjust="spacingAndGlyphs">刘伟巍</text>
<text class="a" x="785" y="867" style="font-size:12px" textLength="131" lengthAdjust="spacingAndGlyphs">Microsoft Excel - 6V29U1...</text>
<text class="a" x="1537" y="848" style="font-size:11px" textLength="28" lengthAdjust="spacingAndGlyphs">19:51</text>
<text class="a" x="1533" y="868" style="font-size:12px" textLength="36" lengthAdjust="spacingAndGlyphs">星期三</text>
<text class="a" x="1526" y="884" style="font-size:11px">2016/9/28</text>
</g>
<path d="M5 832L12 830V838L5 839ZM13 830L19 829V837L13 838ZM5 840L12 839V846L5 845ZM13 839L19 838V846L13 847Z" fill="#e8801c"/>
<path d="M13 839L19 838V846L13 847Z" fill="#2a6cc8"/><path d="M13 830L19 829V837L13 838Z" fill="#60a020"/>
<path d="M131 832h10l-5 6h8l-10 7 3-6h-6z" fill="#3cb0e0"/><path d="M131 832h10l-5 6h-4z" fill="#70b040"/>
<rect x="156" y="832" width="11" height="15" fill="#8cc4e8" stroke="#4878a8"/>
<path d="M307 834l6-3 7 3-2 12-7 1-4-3z" fill="#e8e8d8" stroke="#555"/><path d="M313 832l5 3-2 10-3-1z" fill="#c82020"/><path d="M310 836l3 8-4-1z" fill="#309030"/>
<circle cx="345" cy="839" r="7" fill="#d89820"/><path d="M345 833l2 4 4 1-3 3 1 4-4-2-4 2 1-4-3-3 4-1z" fill="#c83010"/>
<path d="M488 832h8q3 0 3 4t-5 5h-3v5h-4z" fill="#2a8c4a"/>
<rect x="637" y="832" width="9" height="15" fill="#fff" stroke="#4878a8"/><path d="M639 836h5M639 839h5M639 842h5" stroke="#3060c0"/>
<rect x="781" y="831" width="14" height="15" fill="#2030b0"/><rect x="784" y="832" width="8" height="5" fill="#fff"/><rect x="784" y="841" width="8" height="5" fill="#c8c8c8"/>
<circle cx="936" cy="839" r="8" fill="#3c7c8c"/><circle cx="936" cy="839" r="4" fill="#9cd8e8"/><path d="M929 834l4-3" stroke="#e0a020" stroke-width="2"/>
<use href="#xi" x="1076" y="831"/><use href="#xi" x="1222" y="831"/>
<use href="#xi" x="120" y="855"/><use href="#xi" x="281" y="855"/>
<circle cx="451" cy="863" r="7" fill="#3c9c8c"/><circle cx="451" cy="863" r="3" fill="#c8e8e0"/><path d="M444 858l3-3" stroke="#d0a020" stroke-width="2"/>
<rect x="604" y="855" width="15" height="16" rx="2" fill="#1478d0"/><path d="M607 860h8M607 864h6M608 860v8" stroke="#fff" stroke-width="2"/>
<rect x="766" y="855" width="15" height="16" fill="#e8f0e8" stroke="#408040"/><path d="M770 859l7 8M777 859l-7 8" stroke="#208020" stroke-width="2"/>
<circle cx="79" cy="859" r="4" fill="#e87c20"/><circle cx="73" cy="860" r="4" fill="#30a040"/><circle cx="80" cy="866" r="4" fill="#c8a020"/><circle cx="74" cy="868" r="4" fill="#d03020"/><circle cx="77" cy="863" r="3" fill="#4080d0"/>
<rect x="1385" y="834" width="14" height="14" rx="2" fill="#e8e8e0" stroke="#888"/><path d="M1388 838h8M1388 841h8M1388 844h8" stroke="#999"/>
<rect x="1387" y="855" width="5" height="5" fill="none" stroke="#111"/><rect x="1389" y="853" width="5" height="5" fill="none" stroke="#111"/><path d="M1386 865h5l-2.500 3z" fill="#111"/>
<path d="M1412 835l2-2 2 2M1412 840l2-2 2 2" stroke="#111" fill="none"/>
<path d="M1427 832l12 18M1439 832l-12 18" stroke="#503090" stroke-width="3.500"/>
<rect x="1452" y="832" width="13" height="15" rx="3" fill="#2878d8"/><circle cx="1458" cy="839" r="4" fill="#fff"/><rect x="1459" y="845" width="9" height="6" fill="#30c030"/>
<ellipse cx="1483" cy="840" rx="6" ry="9" fill="#0a2a8c"/><path d="M1481 835l5 3-5 4 5 4-3 2M1481 835v13" stroke="#fff" fill="none"/>
<path d="M1500 833h12l-2 12-4 3-4-3z" fill="#50a040"/><path d="M1507 835l-3 6h3l-2 5 5-7h-3l2-4z" fill="#f0e040"/>
<path d="M1430 860l4-4 4 2-1 4 4 4-3 6-6 1-3-4z" fill="#d8281c"/><rect x="1434" y="866" width="5" height="4" fill="#f0c040"/>
<path d="M1452 871l6-12 6 12h-4l-2-4-2 4z" fill="#e03028"/><path d="M1458 859l6 12h-4z" fill="#30a030"/>
<path d="M1476 861l10-5-2 6 5-1-9 5 2 6-8-3 4-4z" fill="#1c88e8"/>
<rect x="1503" y="856" width="8" height="9" fill="#e8e8e0" stroke="#333"/><path d="M1507 865V873" stroke="#333"/><path d="M1505 858v4M1509 858v4" stroke="#333"/>
<rect x="1581" y="860" width="15" height="12" fill="#20508c"/><rect x="1583" y="862" width="11" height="7" fill="#4a90c8"/>

<!-- popup -->
<rect x="463" y="261" width="653" height="364" fill="#d4d0c8"/>
<path d="M463.500 625V261.500H1116" fill="none" stroke="#fff" stroke-width="2"/>
<path d="M1115 262V624H464" fill="none" stroke="#777" stroke-width="2"/>
<rect x="466" y="264" width="647" height="19" fill="url(#pg)"/>
<use href="#xi" transform="translate(468,266) scale(.9)"/>
<text x="487" y="278" class="a" style="font-size:12px;font-weight:bold;fill:#ddd" textLength="65" lengthAdjust="spacingAndGlyphs">Popview - 1</text>
<rect x="1094" y="266" width="15" height="16" fill="#e8e8e8" stroke="#666"/>
<path d="M1098 270l7 8M1105 270l-7 8" stroke="#111" stroke-width="2"/>
<rect x="466" y="283" width="647" height="340" fill="#2f7a6a"/>
<rect x="469" y="287" width="603" height="306" fill="#c8ece4"/>
<rect x="469" y="287" width="601" height="304" fill="#000"/>
<rect x="470" y="288" width="600" height="41" fill="#bc9800"/>
<path d="M470 329H733Q751 333 751 351T733 372H470Z" fill="#bc9800"/>
<path d="M470 372H733Q751 372 751 351" fill="none" stroke="#5a8a20" stroke-width="1"/>
<path d="M1070 330H840Q818 332 818 351T840 372H1070Z" fill="#bc9800" stroke="#788a94" stroke-width="1"/>
<path d="M828 329Q818 332 816 345" fill="none" stroke="#3c9a00"/>
<rect x="758" y="343" width="52" height="14" rx="6" fill="#3c9a00"/>
<ellipse cx="765" cy="351" rx="6.500" ry="6" fill="#bc9800"/><ellipse cx="784" cy="351" rx="6.500" ry="6" fill="#bc9800"/><ellipse cx="804" cy="351" rx="6.500" ry="6" fill="#bc9800"/>
<rect x="669" y="408" width="39" height="39" fill="#f00"/><rect x="786" y="408" width="39" height="39" fill="#f00"/>
<rect x="470" y="523" width="600" height="2" fill="#908a60"/><rect x="470" y="525" width="600" height="3" fill="#bc9800"/>
<rect x="1074" y="286" width="37" height="306" fill="#52c8aa" stroke="#2f7a6a"/>
<g transform="translate(1076,287)"><use href="#pb"/><rect x="9" y="10" width="12" height="13" class="n" style="stroke-width:1.500"/><path d="M11 16h6M11 16l3-2M11 16l3 2" class="n"/><rect x="20" y="8" width="5" height="5" class="n"/></g>
<g transform="translate(1076,322)"><use href="#pb"/><rect x="10" y="14" width="13" height="9" class="k"/><path d="M16.500 6l5 5h-3v5h-4v-5h-3z"/></g>
<g transform="translate(1076,357)"><use href="#pb"/><rect x="10" y="8" width="13" height="9" class="k"/><path d="M16.500 25l5-5h-3v-5h-4v5h-3z"/></g>
<g transform="translate(1076,392)"><use href="#pb"/><path d="M15 8H24V23H15" class="k"/><path d="M8 15.500l5-5v3h5v5h-5v3z"/></g>
<g transform="translate(1076,427)"><use href="#pb"/><path d="M18 8H9V23H18" class="k"/><path d="M25 15.500l-5-5v3h-5v5h5v3z"/></g>
<g transform="translate(1076,462)"><use href="#pb"/><rect x="13.500" y="12.500" width="6" height="6" class="n"/><path d="M16.500 11l-4-4h8zM16.500 20l-4 4h8zM12 15.500l-4-4v8zM21 15.500l4-4v8z"/><path d="M8 7l5 5M25 7l-5 5M8 24l5-5M25 24l-5-5" class="n"/></g>
<g transform="translate(1076,497)"><use href="#pb"/><rect x="13.500" y="12.500" width="6" height="6" class="n"/><path d="M16.500 7l-3 4h6zM16.500 24l-3-4h6zM8 15.500l4-3v6zM25 15.500l-4-3v6z"/></g>
<rect x="468" y="594" width="643" height="28" fill="#52c8aa"/>
<rect x="468" y="596" width="640" height="24" fill="#9cd9d9"/>
<path d="M468 620V596H1108" fill="none" stroke="#d8f4f4" stroke-width="2"/><path d="M1108 596V620H468" fill="none" stroke="#3c6c64" stroke-width="2"/>
<text x="766" y="613" class="m" style="font-size:14.500px" textLength="44" lengthAdjust="spacingAndGlyphs">Close</text>
</svg>
</body></html>
